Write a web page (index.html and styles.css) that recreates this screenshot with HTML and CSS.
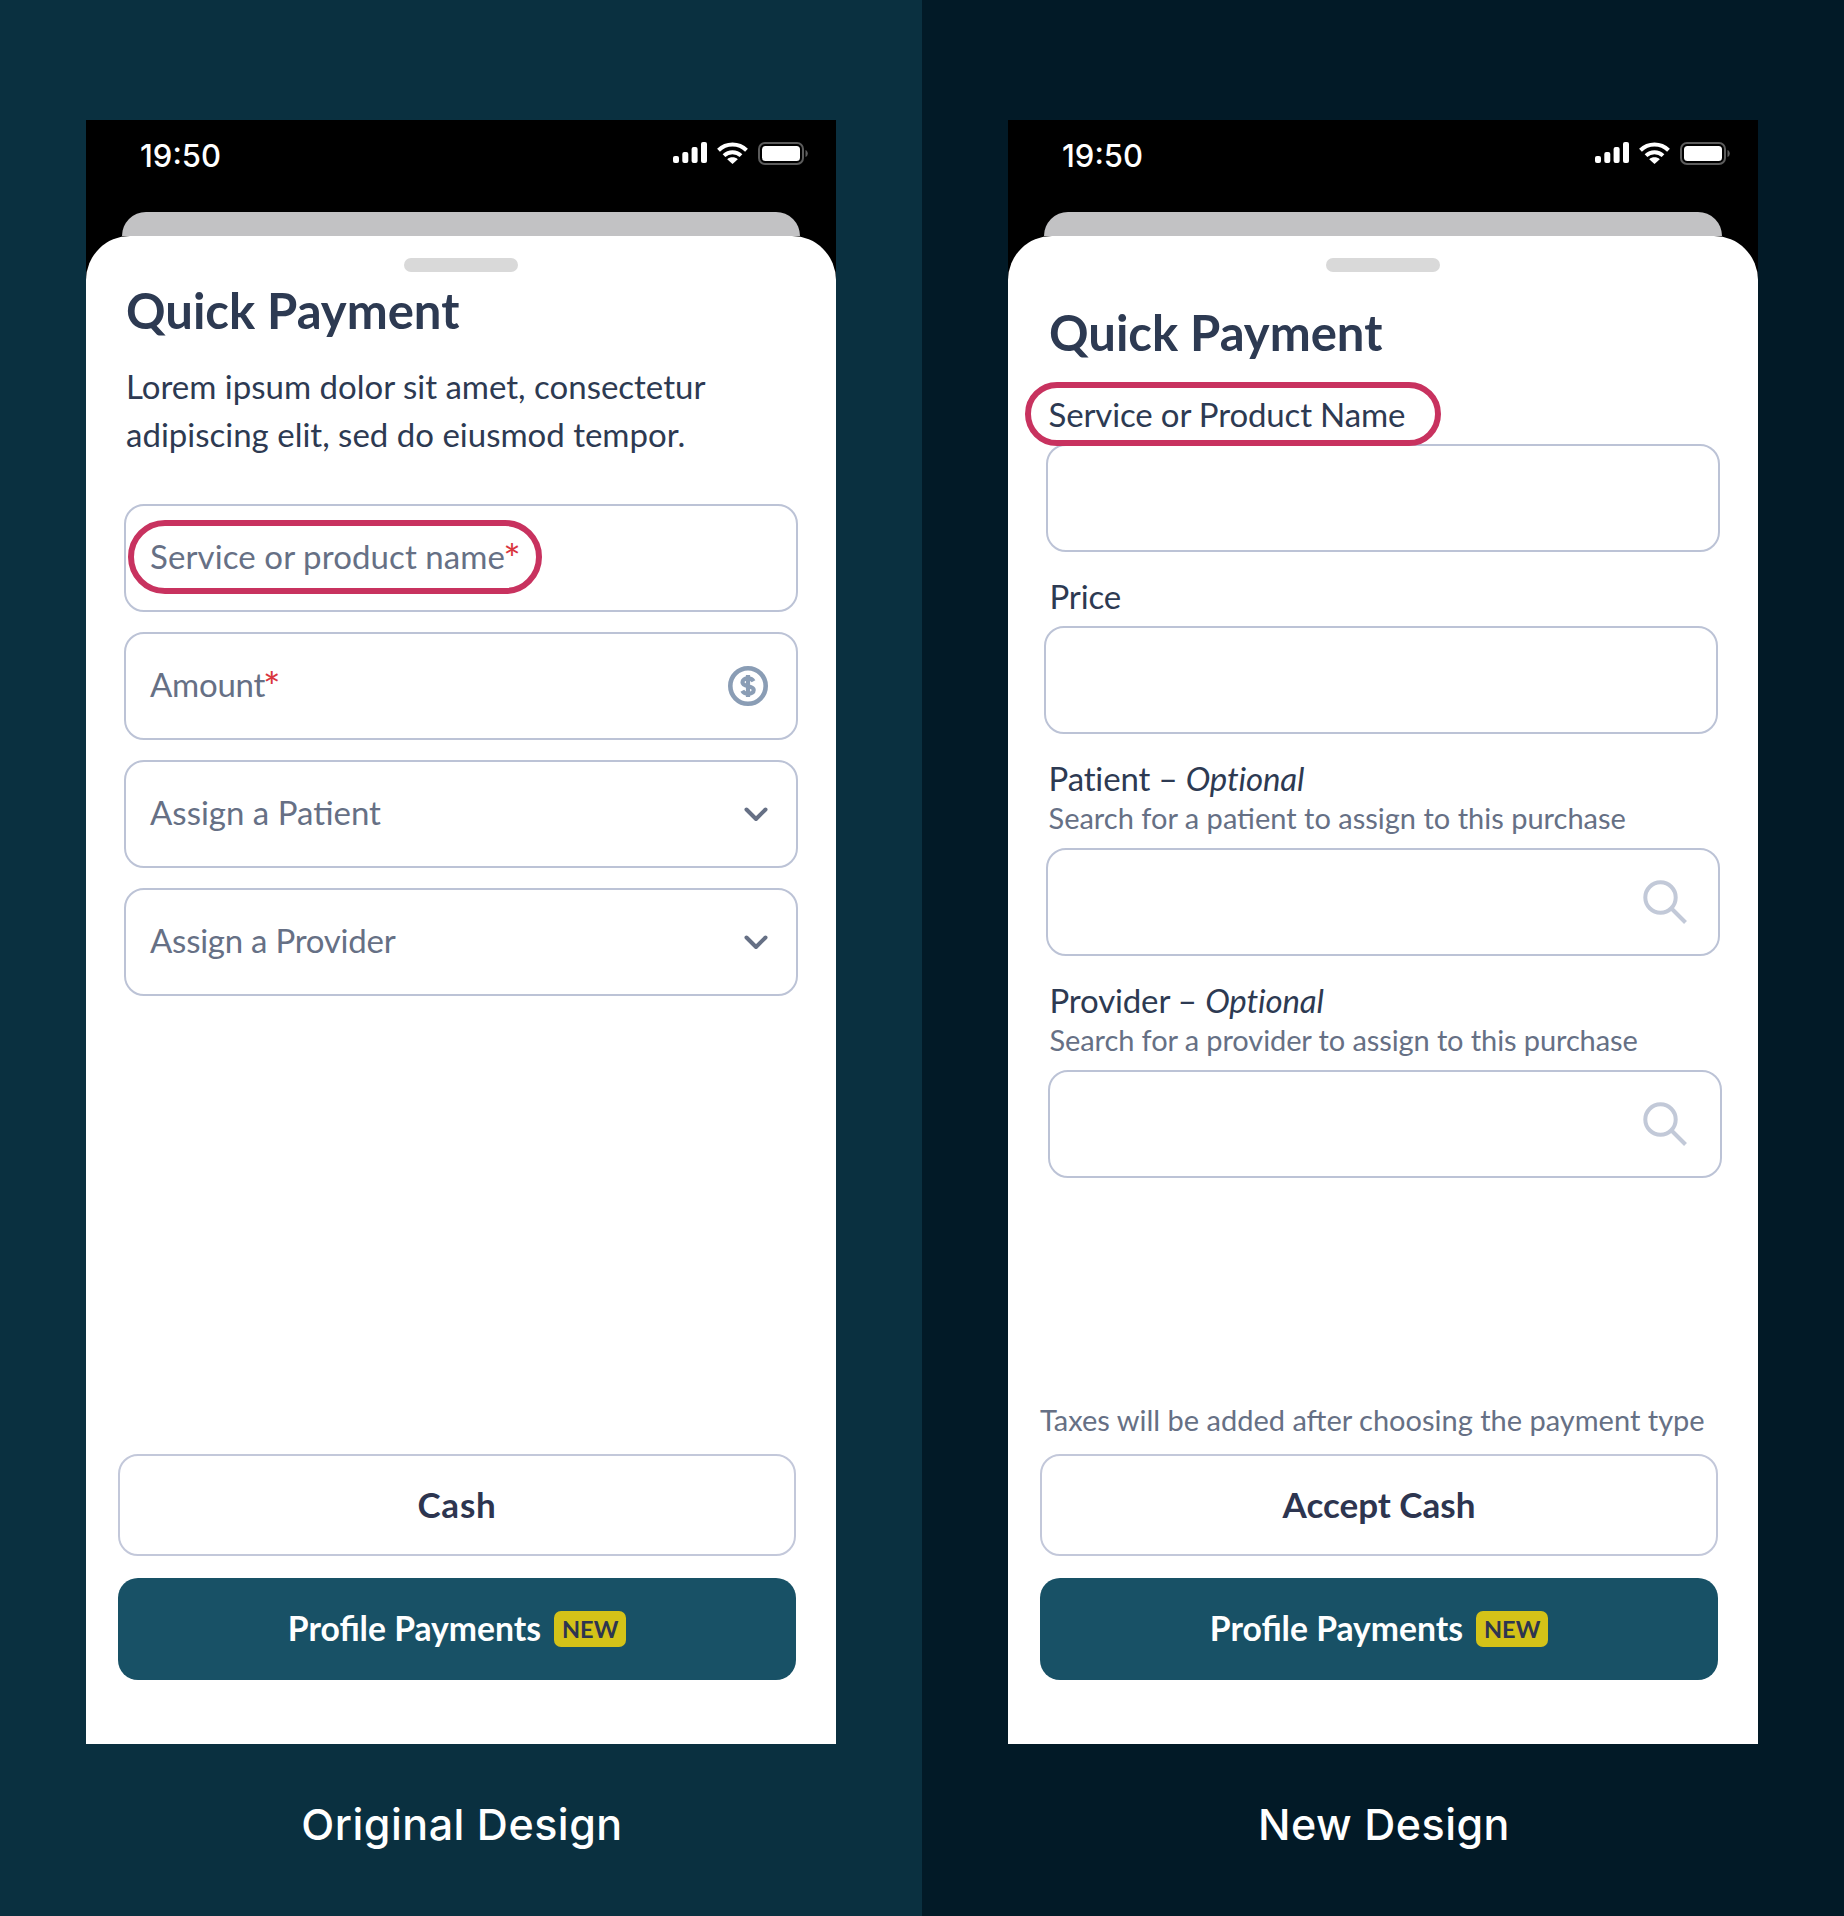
FILE: index.html
```html
<!DOCTYPE html>
<html lang="en">
<head>
<meta charset="utf-8">
<title>Quick Payment comparison</title>
<link rel="stylesheet" href="styles.css">
</head>
<body>
<svg class="defs" width="0" height="0" aria-hidden="true">
  <symbol id="signal" viewBox="0 0 34 21"><rect x="0" y="14" width="6" height="7" rx="2"/><rect x="9.3" y="10" width="6" height="11" rx="2"/><rect x="18.6" y="5" width="6" height="16" rx="2"/><rect x="28" y="0" width="6" height="21" rx="2"/></symbol>
  <symbol id="wifi" viewBox="0 0 31 22"><path d="M1.500 8.200C9.300 .6 21.700 .6 29.500 8.200" fill="none" stroke="#fff" stroke-width="4"/><path d="M7 13.600c4.800-4.400 12.200-4.400 17 0" fill="none" stroke="#fff" stroke-width="4"/><path d="M10.200 17.200c3-2.600 7.600-2.600 10.600 0l-5.300 4.800z"/></symbol>
  <symbol id="battery" viewBox="0 0 50 23"><rect x="1" y="1" width="44" height="21" rx="6" fill="none" stroke="#5c5c5c" stroke-width="2"/><rect x="4" y="4" width="38" height="15" rx="3.500" fill="#fff"/><path d="M47.500 8v7c1.400-.5 2.300-2 2.300-3.500S48.900 8.500 47.500 8z" fill="#5c5c5c"/></symbol>
  <symbol id="chevron" viewBox="0 0 24 15"><path d="M2.500 2.500L12 12l9.500-9.500" fill="none" stroke="#667085" stroke-width="4" stroke-linecap="round" stroke-linejoin="round"/></symbol>
  <symbol id="search" viewBox="0 0 44 44"><circle cx="17.500" cy="17.500" r="15.200" fill="none" stroke="#c2c9d8" stroke-width="4"/><path d="M28.500 28.500L42.500 42.500" fill="none" stroke="#c2c9d8" stroke-width="4"/></symbol>
  <symbol id="dollar" viewBox="0 0 40 40"><circle cx="20" cy="20" r="17.700" fill="none" stroke="#8a9db5" stroke-width="4.600"/><path d="M25.500 15.200c-1-1.900-3-2.900-5.500-2.900-3.200 0-5.500 1.600-5.500 3.900 0 5.600 11.200 2.400 11.200 7.700 0 2.400-2.500 3.900-5.700 3.900-2.600 0-4.700-1.100-5.700-3M20 9v22" fill="none" stroke="#8a9db5" stroke-width="4.200"/></symbol>
</svg>
<main class="page">
  <section class="panel panel-old">
    <div class="phone">
      <div class="status">
        <span class="time">19:50</span>
        <div class="status-icons">
          <svg class="ic-signal"><use href="#signal"/></svg>
          <svg class="ic-wifi"><use href="#wifi"/></svg>
          <svg class="ic-battery"><use href="#battery"/></svg>
        </div>
      </div>
      <div class="peek"></div>
      <div class="sheet">
        <div class="handle"></div>
        <h1 class="title title-old">Quick Payment</h1>
        <p class="lede">Lorem ipsum dolor sit amet, consectetur<br>adipiscing elit, sed do eiusmod tempor.</p>
        <div class="stack">
          <div class="input input-text">
            <span class="pill pill-old"></span>
            <span class="placeholder ph-name">Service or product name<span class="req">*</span></span>
          </div>
          <div class="input input-text">
            <span class="placeholder ph-tight">Amount<span class="req">*</span></span>
            <svg class="ic-dollar"><use href="#dollar"/></svg>
          </div>
          <div class="input input-text">
            <span class="placeholder">Assign a Patient</span>
            <svg class="ic-chevron"><use href="#chevron"/></svg>
          </div>
          <div class="input input-text">
            <span class="placeholder ph-tight">Assign a Provider</span>
            <svg class="ic-chevron"><use href="#chevron"/></svg>
          </div>
        </div>
        <div class="actions">
          <button class="btn btn-outline btn-wide">Cash</button>
          <button class="btn btn-primary"><span class="btn-label">Profile Payments</span><span class="badge">NEW</span></button>
        </div>
      </div>
    </div>
    <p class="caption">Original Design</p>
  </section>

  <section class="panel panel-new">
    <div class="phone">
      <div class="status">
        <span class="time">19:50</span>
        <div class="status-icons">
          <svg class="ic-signal"><use href="#signal"/></svg>
          <svg class="ic-wifi"><use href="#wifi"/></svg>
          <svg class="ic-battery"><use href="#battery"/></svg>
        </div>
      </div>
      <div class="peek"></div>
      <div class="sheet">
        <div class="handle"></div>
        <h1 class="title title-new">Quick Payment</h1>
        <div class="field field-a first">
          <div class="label label-a"><span class="pill pill-new"></span>Service or Product Name</div>
          <div class="input"></div>
        </div>
        <div class="field field-b">
          <div class="label label-b">Price</div>
          <div class="input"></div>
        </div>
        <div class="field field-a">
          <div class="label label-a">Patient – <em>Optional</em></div>
          <div class="hint label-a">Search for a patient to assign to this purchase</div>
          <div class="input input-search"><svg class="ic-search"><use href="#search"/></svg></div>
        </div>
        <div class="field field-c">
          <div class="label label-c">Provider – <em>Optional</em></div>
          <div class="hint label-c hint-tight">Search for a provider to assign to this purchase</div>
          <div class="input input-search"><svg class="ic-search"><use href="#search"/></svg></div>
        </div>
        <div class="actions">
          <p class="taxes">Taxes will be added after choosing the payment type</p>
          <button class="btn btn-outline">Accept Cash</button>
          <button class="btn btn-primary"><span class="btn-label">Profile Payments</span><span class="badge">NEW</span></button>
        </div>
      </div>
    </div>
    <p class="caption">New Design</p>
  </section>
</main>
</body>
</html>
```

FILE: styles.css
```css
* { box-sizing: border-box; }
html, body { margin: 0; padding: 0; }
body { font-family: "Lato", "Noto Sans", sans-serif; color: #2d3a52; }
.defs { display: block; height: 0; }

.page { display: grid; grid-template-columns: 922px 922px; height: 1916px; }
.panel { padding: 120px 0 0 86px; }
.panel-old { background: #0a3040; }
.panel-new { background: #021a27; }

.phone { width: 750px; height: 1624px; background: #000; display: flex; flex-direction: column; }

.status { height: 92px; display: flex; justify-content: space-between; padding: 0 28px 0 54px; flex: none; }
.time { font-family: "Inter", sans-serif; font-size: 31px; font-weight: 500; line-height: 72px; color: #fff; }
.status-icons { display: flex; align-items: flex-start; gap: 10px; padding-top: 22px; fill: #fff; }
.ic-signal { width: 34px; height: 21px; }
.ic-wifi { width: 31px; height: 22px; }
.ic-battery { width: 50px; height: 23px; }

.peek { height: 24px; margin: 0 36px; background: #c2c2c4; border-radius: 26px 26px 0 0; flex: none; }
.sheet { flex: 1; background: #fff; border-radius: 44px 44px 0 0; padding: 22px 0 64px; display: flex; flex-direction: column; }
.handle { width: 114px; height: 14px; margin: 0 auto; border-radius: 7px; background: #d9d9d9; flex: none; }

.title { margin: 0; font-size: 49px; font-weight: 700; line-height: 56px; letter-spacing: 0; color: #2d3a52; }
.title-old { margin: 10px 0 0 40px; }
.title-new { margin: 32px 0 0 41px; }
.lede { margin: 24px 0 46px 40px; font-size: 33px; line-height: 48px; color: #2d3a52; }

.stack { display: flex; flex-direction: column; gap: 20px; margin-left: 38px; }

.input { position: relative; width: 674px; height: 108px; border: 2px solid #bcc3d6; border-radius: 20px; background: #fff; display: flex; align-items: center; flex: none; }
.input-text { justify-content: space-between; padding: 0 28px 0 24px; }
.input-search { justify-content: flex-end; padding-right: 31px; }
.field-c .input-search { padding-right: 33px; }
.placeholder { font-size: 33px; color: #667085; padding-bottom: 4px; }
.ph-name { letter-spacing: 0.1px; }
.ph-tight { letter-spacing: -0.25px; }
.req { color: #d9363e; font-size: 1.25em; line-height: 0; vertical-align: -0.12em; margin-left: -2px; }

.pill { position: absolute; border: 6px solid #c8325f; border-radius: 38px; background: transparent; }
.pill-old { left: 2px; top: 14px; width: 414px; height: 74px; }
.pill-new { left: -24px; top: -12px; width: 416px; height: 64px; z-index: 1; }

.ic-dollar { width: 40px; height: 40px; }
.ic-chevron { width: 24px; height: 15px; }
.ic-search { width: 44px; height: 44px; }

.field { margin-top: 24px; flex: none; }
.field.first { margin-top: 34px; }
.field-a { margin-left: 38px; }
.field-b { margin-left: 36px; }
.field-c { margin-left: 40px; }
.label { position: relative; font-size: 33px; line-height: 40px; margin-bottom: 10px; letter-spacing: -0.15px; color: #2d3a52; }
.label-a { margin-left: 2.500px; }
.label-b { margin-left: 5.500px; }
.label-c { margin-left: 1.500px; }
.label em { font-style: italic; }
.hint { font-size: 29px; line-height: 36px; color: #667085; margin-top: -8px; margin-bottom: 12px; }
.hint-tight { letter-spacing: -0.1px; }

.actions { margin: auto 0 0 32px; width: 678px; display: flex; flex-direction: column; gap: 22px; }
.taxes { margin: 0 0 -6px; font-size: 29px; line-height: 36px; color: #667085; }
.btn { width: 100%; height: 102px; border-radius: 20px; font-family: inherit; font-size: 35px; font-weight: 700; display: flex; align-items: center; justify-content: center; }
.btn-outline { background: #fff; border: 2px solid #c3c8da; color: #2d3550; padding-bottom: 3px; }
.btn-wide { letter-spacing: 0.8px; }
.btn-primary { background: #185166; border: 0; color: #fff; gap: 13px; }
.btn-label { font-size: 33.700px; padding-bottom: 2px; }
.badge { width: 72px; height: 36px; border-radius: 7px; background: #d4c218; color: #2d3550; font-size: 23.500px; font-weight: 700; line-height: 36px; text-align: center; }

.caption { width: 750px; margin: 50px 0 0; padding-left: 2px; text-align: center; font-family: "Inter", sans-serif; font-size: 43px; font-weight: 500; line-height: 60px; letter-spacing: 0.5px; color: #fff; }
```
